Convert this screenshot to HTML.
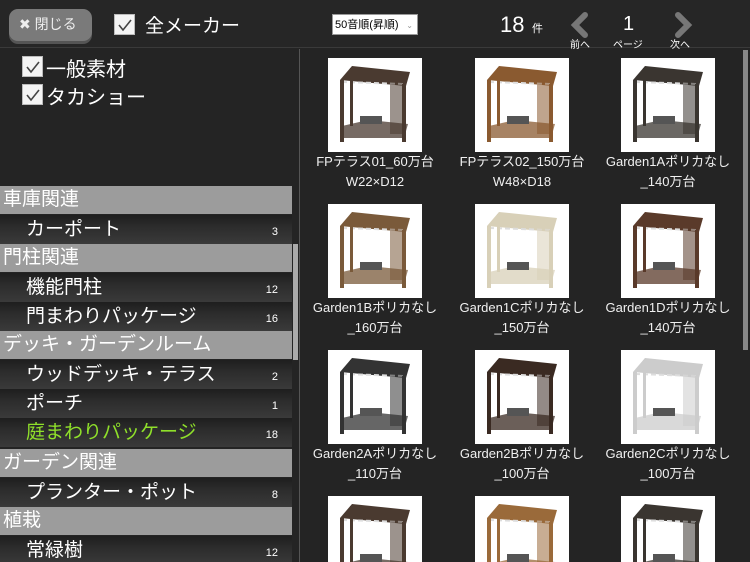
<!DOCTYPE html>
<html style="width:750px;height:562px;overflow:hidden"><head><meta charset="utf-8"><style>
*{margin:0;padding:0;box-sizing:border-box}
body{width:750px;height:562px;overflow:hidden;background:#242424;font-family:"Liberation Sans","Noto Sans CJK JP",sans-serif;color:#fff;position:relative}
.top{position:absolute;left:0;top:0;width:750px;height:48px;background:#262626;border-bottom:1px solid #3a3a3a}
.close{position:absolute;left:9px;top:9px;width:83px;height:32px;background:#7a7a7a;border-radius:9px;box-shadow:0 3px 0 #555;font-size:14px;line-height:30px;padding-left:10px;color:#eee}
.cb{position:absolute;width:21px;height:21px;background:#f4f4f4;border:1px solid #bbb}
.cb svg{position:absolute;left:2px;top:3px}
.t{position:absolute;white-space:nowrap}
.sel{position:absolute;left:332px;top:14px;width:86px;height:21px;background:#fff;color:#000;font-size:11px;line-height:21px;padding-left:2px;border:1px solid #999}
.left{position:absolute;left:0;top:49px;width:300px;height:513px;background:#242424;border-right:1px solid #555}
.h{position:absolute;left:0;width:292px;height:28px;background:#9c9c9c;font-size:19px;line-height:28px;padding-left:3px;color:#fff}
.i{position:absolute;left:0;width:292px;height:29px;background:linear-gradient(#1e1e1e,#2c2c2c 40%,#3a3a3a);font-size:19px;line-height:29px;padding-left:26px;color:#fff}
.i span{position:absolute;right:14px;top:3px;font-size:11px}
.cell{position:absolute;width:94px;height:94px;background:#fff;overflow:hidden}
.cap{position:absolute;width:150px;text-align:center;font-size:13px;line-height:20px;color:#f0f0f0}
</style></head><body>
<svg width="0" height="0" style="position:absolute">
<symbol id="p" viewBox="0 0 94 94">
<path d="M12 22 L24 8 L82 14 L78 28 Z" fill="currentColor"/>
<path d="M14 24 L76 26" stroke="#ddd" stroke-width="2" stroke-dasharray="5 3"/>
<rect x="12" y="22" width="4" height="62" fill="currentColor"/>
<rect x="74" y="26" width="4" height="58" fill="currentColor"/>
<rect x="22" y="10" width="3" height="58" fill="currentColor"/>
<rect x="62" y="24" width="14" height="52" fill="currentColor" opacity=".55"/>
<path d="M14 68 L40 62 L80 66 L76 80 L16 80 Z" fill="currentColor" opacity=".75"/>
<rect x="32" y="58" width="22" height="8" fill="#555"/>
</symbol>
</svg>
<div class="top">
<div class="close">✖ 閉じる</div>
<div class="cb" style="left:114px;top:14px"><svg width="16" height="14"><path d="M2 7 L6 12 L14 2" stroke="#444" stroke-width="1.6" fill="none"/></svg></div>
<div class="t" style="left:145px;top:11px;font-size:19px">全メーカー</div>
<div class="sel">50音順(昇順)<span style="position:absolute;right:4px;color:#999;font-size:8px">⌄</span></div>
<div class="t" style="left:500px;top:12px;font-size:22px">18</div>
<div class="t" style="left:532px;top:20px;font-size:11px">件</div>
<svg style="position:absolute;left:569px;top:12px" width="22" height="26"><path d="M16 3 L6 13 L16 23" stroke="#777" stroke-width="6" fill="none" stroke-linecap="round"/></svg>
<div class="t" style="left:570px;top:36px;font-size:10px">前へ</div>
<div class="t" style="left:623px;top:13px;font-size:20px">1</div>
<div class="t" style="left:613px;top:36px;font-size:10px">ページ</div>
<svg style="position:absolute;left:672px;top:12px" width="22" height="26"><path d="M6 3 L16 13 L6 23" stroke="#777" stroke-width="6" fill="none" stroke-linecap="round"/></svg>
<div class="t" style="left:670px;top:36px;font-size:10px">次へ</div>
</div>
<div class="left">
<div class="cb" style="left:22px;top:7px"><svg width="16" height="14"><path d="M2 7 L6 12 L14 2" stroke="#444" stroke-width="1.6" fill="none"/></svg></div>
<div class="t" style="left:46px;top:4px;font-size:20px">一般素材</div>
<div class="cb" style="left:22px;top:35px"><svg width="16" height="14"><path d="M2 7 L6 12 L14 2" stroke="#444" stroke-width="1.6" fill="none"/></svg></div>
<div class="t" style="left:46px;top:32px;font-size:20px">タカショー</div>
<div class="h" style="top:137px">車庫関連</div>
<div class="i" style="top:166px">カーポート<span>3</span></div>
<div class="h" style="top:195px">門柱関連</div>
<div class="i" style="top:224px">機能門柱<span>12</span></div>
<div class="i" style="top:253px">門まわりパッケージ<span>16</span></div>
<div class="h" style="top:282px">デッキ・ガーデンルーム</div>
<div class="i" style="top:311px">ウッドデッキ・テラス<span>2</span></div>
<div class="i" style="top:340px">ポーチ<span>1</span></div>
<div class="i" style="top:369px;color:#8fe02a">庭まわりパッケージ<span style="color:#fff">18</span></div>
<div class="h" style="top:400px">ガーデン関連</div>
<div class="i" style="top:429px">プランター・ポット<span>8</span></div>
<div class="h" style="top:458px">植栽</div>
<div class="i" style="top:487px">常緑樹<span>12</span></div>
<div style="position:absolute;left:293px;top:195px;width:5px;height:116px;background:#aaa"></div>
</div>
<div style="position:absolute;left:743px;top:50px;width:5px;height:300px;background:#888"></div>

<div class="cell" style="left:328px;top:58px;color:#4a3a30"><svg width="94" height="94"><use href="#p"/></svg></div>
<div class="cell" style="left:475px;top:58px;color:#8a5a30"><svg width="94" height="94"><use href="#p"/></svg></div>
<div class="cell" style="left:621px;top:58px;color:#3a3530"><svg width="94" height="94"><use href="#p"/></svg></div>
<div class="cap" style="left:300px;top:152px">FPテラス01_60万台<br>W22×D12</div>
<div class="cap" style="left:447px;top:152px">FPテラス02_150万台<br>W48×D18</div>
<div class="cap" style="left:593px;top:152px">Garden1Aポリカなし<br>_140万台</div>

<div class="cell" style="left:328px;top:204px;color:#7a5a3a"><svg width="94" height="94"><use href="#p"/></svg></div>
<div class="cell" style="left:475px;top:204px;color:#d8d0b8"><svg width="94" height="94"><use href="#p"/></svg></div>
<div class="cell" style="left:621px;top:204px;color:#5a3a2a"><svg width="94" height="94"><use href="#p"/></svg></div>
<div class="cap" style="left:300px;top:298px">Garden1Bポリカなし<br>_160万台</div>
<div class="cap" style="left:447px;top:298px">Garden1Cポリカなし<br>_150万台</div>
<div class="cap" style="left:593px;top:298px">Garden1Dポリカなし<br>_140万台</div>

<div class="cell" style="left:328px;top:350px;color:#333"><svg width="94" height="94"><use href="#p"/></svg></div>
<div class="cell" style="left:475px;top:350px;color:#3a2a22"><svg width="94" height="94"><use href="#p"/></svg></div>
<div class="cell" style="left:621px;top:350px;color:#ccc"><svg width="94" height="94"><use href="#p"/></svg></div>
<div class="cap" style="left:300px;top:444px">Garden2Aポリカなし<br>_110万台</div>
<div class="cap" style="left:447px;top:444px">Garden2Bポリカなし<br>_100万台</div>
<div class="cap" style="left:593px;top:444px">Garden2Cポリカなし<br>_100万台</div>

<div class="cell" style="left:328px;top:496px;height:66px;color:#4a3a30"><svg width="94" height="94"><use href="#p"/></svg></div>
<div class="cell" style="left:475px;top:496px;height:66px;color:#9a6a3a"><svg width="94" height="94"><use href="#p"/></svg></div>
<div class="cell" style="left:621px;top:496px;height:66px;color:#3a3530"><svg width="94" height="94"><use href="#p"/></svg></div>
</body></html>
